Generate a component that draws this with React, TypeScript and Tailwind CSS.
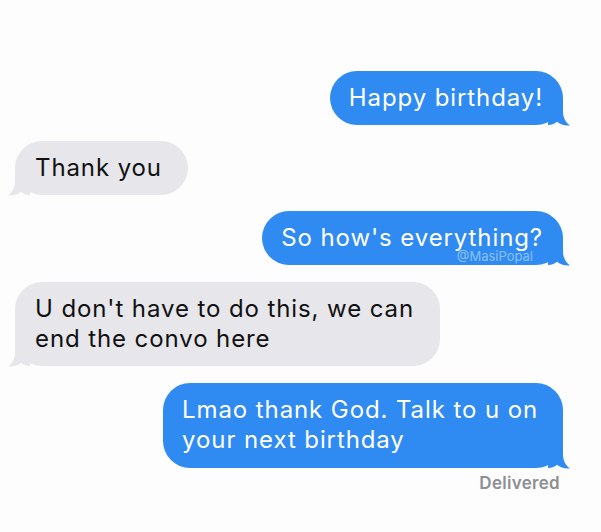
import React from "react";

const BLUE = "#2f8af2";

function TailRight({ color }: { color: string }) {
  return (
    <svg
      className="absolute right-[-7px] bottom-0"
      width="22"
      height="26"
      viewBox="0 0 22 26"
      style={{ overflow: "visible" }}
    >
      <path
        d="M0 0 H15 V12 C15 19 17.5 23 22 26.5 C16 26.8 12 25.3 9 22.8 C7 24.8 4 26 0 26 Z"
        fill={color}
      />
    </svg>
  );
}

function TailLeft({ color }: { color: string }) {
  return (
    <svg
      className="absolute left-[-7px] bottom-0"
      width="22"
      height="26"
      viewBox="0 0 22 26"
      style={{ overflow: "visible" }}
    >
      <g transform="translate(22 0) scale(-1 1)">
        <path
          d="M0 0 H15 V12 C15 19 17.5 23 22 26.5 C16 26.8 12 25.3 9 22.8 C7 24.8 4 26 0 26 Z"
          fill={color}
        />
      </g>
    </svg>
  );
}

function Sent({
  children,
  extra,
  wide,
}: {
  children: React.ReactNode;
  extra?: React.ReactNode;
  wide?: boolean;
}) {
  return (
    <div className="flex justify-end pr-[38px]">
      <div
        className={
          wide
            ? "relative rounded-[27px] bg-[#2f8af2] pl-[19px] pr-[25px] pt-[12px] pb-[13px] text-white"
            : "relative rounded-[27px] bg-[#2f8af2] pl-[19px] pr-[20px] py-[12px] text-white"
        }
      >
        <div className="relative z-10">{children}</div>
        {extra}
        <TailRight color={BLUE} />
      </div>
    </div>
  );
}

function Received({ children }: { children: React.ReactNode }) {
  return (
    <div className="flex justify-start pl-[15px]">
      <div className="relative rounded-[27px] bg-[#e6e6eb] pl-[20px] pr-[26px] py-[12px] text-[#111111]">
        <div className="relative z-10">{children}</div>
        <TailLeft color="#e6e6eb" />
      </div>
    </div>
  );
}

export default function App() {
  return (
    <div
      className="w-[601px] h-[532px] bg-[#fdfdfd] flex flex-col pt-[71px] text-[24px] leading-[30px] tracking-[0.9px]"
      style={{ fontFamily: "Inter, 'Liberation Sans', sans-serif" }}
    >
      <Sent>Happy birthday!</Sent>
      <div className="h-[16px]" />
      <Received>Thank you</Received>
      <div className="h-[16px]" />
      <Sent
        extra={
          <span className="absolute right-[30px] bottom-[1px] z-10 text-[13px] leading-[16px] tracking-normal text-[#8cc1f7]">
            @MasiPopal
          </span>
        }
      >
        So how's everything?
      </Sent>
      <div className="h-[17px]" />
      <Received>
        U don't have to do this, we can
        <br />
        end the convo here
      </Received>
      <div className="h-[17px]" />
      <Sent wide>
        Lmao thank God. Talk to u on
        <br />
        your next birthday
      </Sent>
      <div className="flex justify-end pr-[41px] pt-[4px]">
        <span className="text-[17px] leading-[22px] font-semibold tracking-[0.3px] text-[#8e8e93]">
          Delivered
        </span>
      </div>
    </div>
  );
}
